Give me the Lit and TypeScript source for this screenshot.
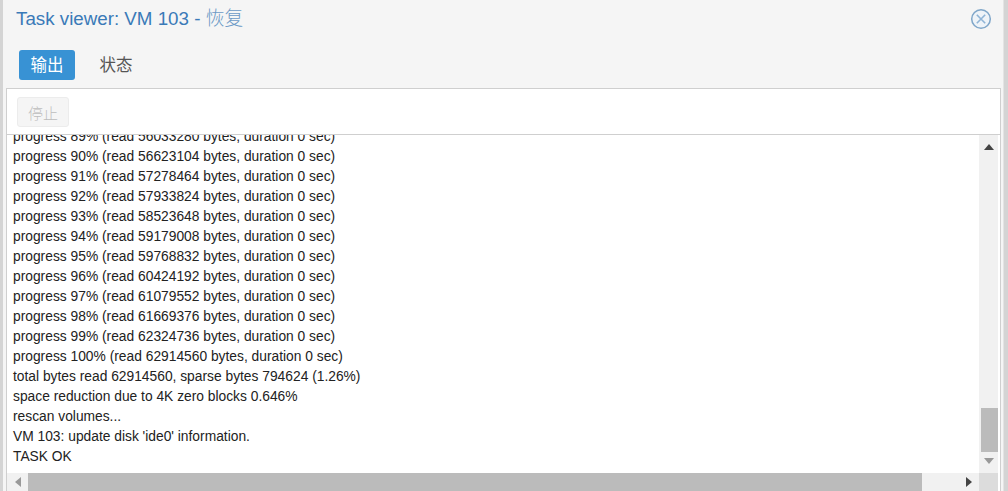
import { LitElement, html, css } from "lit";
import { customElement } from "lit/decorators.js";

const progress: [number, number][] = [
  [89, 56033280], [90, 56623104], [91, 57278464], [92, 57933824], [93, 58523648], [94, 59179008],
  [95, 59768832], [96, 60424192], [97, 61079552], [98, 61669376], [99, 62324736], [100, 62914560],
];
const tail = [
  "total bytes read 62914560, sparse bytes 794624 (1.26%)",
  "space reduction due to 4K zero blocks 0.646%",
  "rescan volumes...",
  "VM 103: update disk 'ide0' information.",
  "TASK OK",
];

@customElement("app-root")
export class AppRoot extends LitElement {
  static styles = css`
    :host { display: block; width: 1008px; height: 491px; overflow: hidden; background: #d4d4d4; font-family: "Liberation Sans", Arial, "Noto Sans CJK SC", sans-serif; }
    .win { margin-left: 3px; width: 1000px; height: 491px; background: #f5f5f5; display: flex; flex-direction: column; box-shadow: 1px 0 0 #e4e4e4; }
    .head { height: 38px; flex: none; display: flex; align-items: center; justify-content: space-between; padding: 0 0 0 13px; }
    .title { font-size: 18.75px; line-height: 22px; color: #3a7ab8; margin-top: -1px; margin-bottom: 1px; }
    .title .cn { color: #6c9ac6; font-family: "Noto Sans CJK SC", sans-serif; font-weight: 300; }
    .close { margin-right: 11px; display: block; }
    .tabs { height: 50px; flex: none; display: flex; align-items: flex-start; gap: 13px; padding: 12px 0 0 16px; box-sizing: border-box; }
    .tab { height: 30px; border-radius: 3px; display: flex; align-items: center; justify-content: center; font-size: 16.5px; line-height: 28px; padding-bottom: 2px; box-sizing: border-box; font-family: "Noto Sans CJK SC", sans-serif; font-weight: 400; color: #555; width: 56px; }
    .tab.on { background: #3892d4; color: #fff; }
    .panel { margin-left: 3px; width: 993px; flex: 1; min-height: 0; background: #fff; border: 1px solid #cfcfcf; border-bottom: none; display: flex; flex-direction: column; }
    .bar { height: 46px; flex: none; box-sizing: border-box; border-bottom: 1px solid #cfcfcf; padding: 8px 0 0 10px; }
    .btn { width: 52px; height: 30px; box-sizing: border-box; border: 1px solid #ececec; background: #f5f5f5; border-radius: 3px; color: #bdbdbd; font-size: 15px; display: flex; align-items: center; justify-content: center; font-family: "Noto Sans CJK SC", sans-serif; font-weight: 300; }
    .body { flex: 1; min-height: 0; display: grid; grid-template-columns: 1fr 19px; grid-template-rows: 1fr 18px; padding-right: 2px; }
    .log { min-width: 0; min-height: 0; overflow: hidden; display: flex; flex-direction: column; justify-content: flex-end; padding: 0 0 6px 6px; font-size: 13.8px; line-height: 20px; color: #222; white-space: nowrap; }
    .vs { background: #f1f1f1; display: flex; flex-direction: column; align-items: flex-end; }
    .vs .up { padding-top: 9px; flex: 1; width: 19px; display: flex; justify-content: center; }
    .vs .thumb { width: 17px; height: 44px; background: #bbb; }
    .vs .down { height: 21px; width: 19px; display: flex; align-items: flex-start; padding-top: 6px; box-sizing: border-box; justify-content: center; }
    .hs { background: #f1f1f1; display: flex; align-items: center; }
    .hs .l { width: 21px; display: flex; justify-content: center; }
    .hs .thumb { width: 894px; height: 18px; background: #bbb; }
    .hs .r { flex: 1; display: flex; justify-content: flex-end; padding-right: 7px; }
    .corner { background: #dcdcdc; }
    svg { display: block; }
  `;

  render() {
    return html`<div class="win">
      <div class="head">
        <div class="title">Task viewer: VM 103 - <span class="cn">恢复</span></div>
        <svg class="close" width="22" height="22" viewBox="0 0 22 22" fill="none">
          <circle cx="11" cy="11" r="9.3" stroke="#7fa6c9" stroke-width="1.5" fill="#eef3f8"/>
          <path d="M6.8 6.8 15.2 15.2M15.2 6.8 6.8 15.2" stroke="#8fb4d6" stroke-width="1.6"/>
        </svg>
      </div>
      <div class="tabs">
        <div class="tab on">输出</div>
        <div class="tab">状态</div>
      </div>
      <div class="panel">
        <div class="bar"><div class="btn">停止</div></div>
        <div class="body">
          <div class="log">
            ${progress.map(([p, b]) => html`<div>progress ${p}% (read ${b} bytes, duration 0 sec)</div>`)}
            ${tail.map((t) => html`<div>${t}</div>`)}
          </div>
          <div class="vs">
            <div class="up"><svg width="10" height="6"><path d="M0 6 5 0 10 6Z" fill="#444"/></svg></div>
            <div class="thumb"></div>
            <div class="down"><svg width="10" height="6"><path d="M0 0 5 6 10 0Z" fill="#999"/></svg></div>
          </div>
          <div class="hs">
            <div class="l"><svg width="6" height="10"><path d="M6 0 0 5 6 10Z" fill="#999"/></svg></div>
            <div class="thumb"></div>
            <div class="r"><svg width="6" height="10"><path d="M0 0 6 5 0 10Z" fill="#444"/></svg></div>
          </div>
          <div class="corner"></div>
        </div>
      </div>
    </div>`;
  }
}
